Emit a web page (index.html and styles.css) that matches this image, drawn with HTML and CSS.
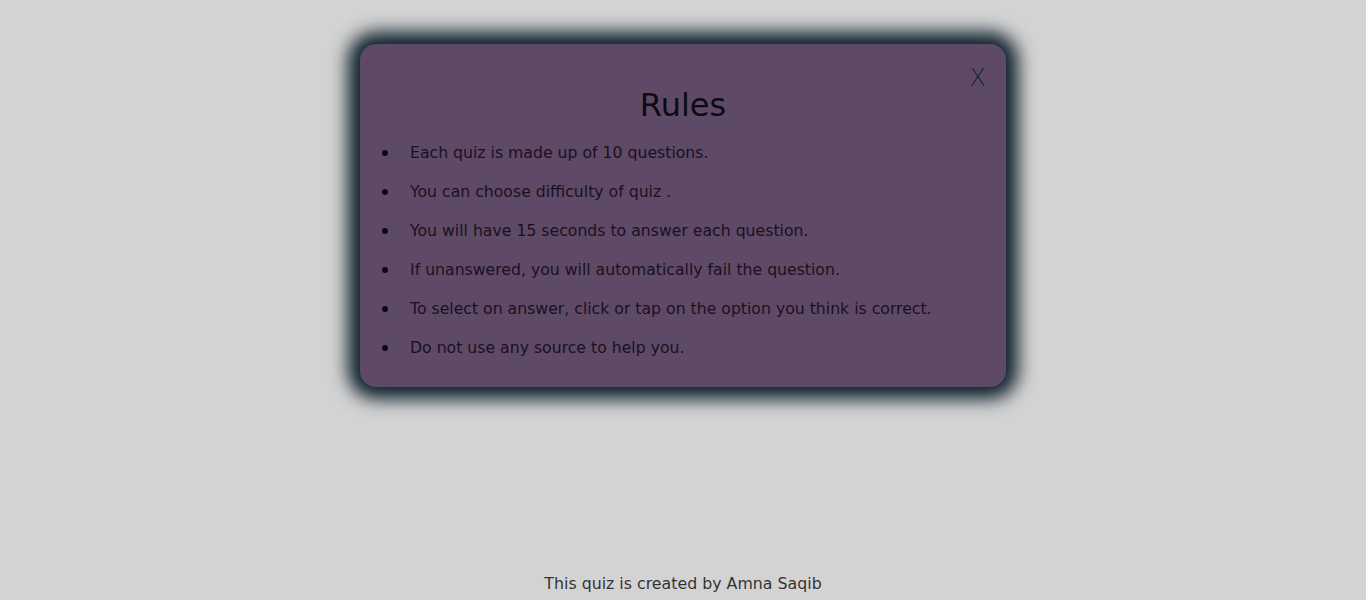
FILE: index.html
```html
<!DOCTYPE html>
<html>
<head>
<meta charset="utf-8">
<link rel="stylesheet" href="styles.css">
</head>
<body>
<main class="page">
  <section class="modal">
    <span class="close">X</span>
    <h1 class="title">Rules</h1>
    <ul class="rules">
      <li>Each quiz is made up of 10 questions.</li>
      <li>You can choose difficulty of quiz .</li>
      <li>You will have 15 seconds to answer each question.</li>
      <li>If unanswered, you will automatically fail the question.</li>
      <li>To select on answer, click or tap on the option you think is correct.</li>
      <li>Do not use any source to help you.</li>
    </ul>
  </section>
</main>
<footer class="footer">This quiz is created by Amna Saqib</footer>
</body>
</html>
```
FILE: styles.css
```css
html, body {
  margin: 0;
  padding: 0;
}
body {
  background: #d3d3d3;
  font-family: "DejaVu Sans", "Noto Sans", sans-serif;
  min-height: 100vh;
  display: flex;
  flex-direction: column;
  align-items: center;
}
.page {
  flex: 1;
  display: flex;
  justify-content: center;
  padding-top: 44px;
}
.modal {
  position: relative;
  width: 646px;
  height: 343px;
  box-sizing: border-box;
  background: #5e4a66;
  border-radius: 16px;
  box-shadow: 0 0 18px 12px #0e202b;
  padding: 41px 10px 0 10px;
  color: #1a1020;
}
.close {
  position: absolute;
  top: 20px;
  right: 20px;
  font-size: 24px;
  color: #142838;
  font-weight: 300;
}
.title {
  margin: 0 0 18px 0;
  text-align: center;
  font-size: 32px;
  font-weight: 400;
  line-height: 40px;
  color: #0e0a12;
}
.rules {
  margin: 0;
  padding-left: 12px;
  list-style: none;
  font-size: 15.7px;
  line-height: 20px;
}
.rules li {
  display: flex;
  align-items: center;
  margin-bottom: 19px;
}
.rules li::before {
  content: "";
  width: 6px;
  height: 6px;
  border-radius: 50%;
  background: #0a0a0e;
  margin-right: 22px;
  flex: none;
}
.footer {
  font-size: 15.8px;
  color: #333;
  line-height: 20px;
  padding-bottom: 6px;
}
```
